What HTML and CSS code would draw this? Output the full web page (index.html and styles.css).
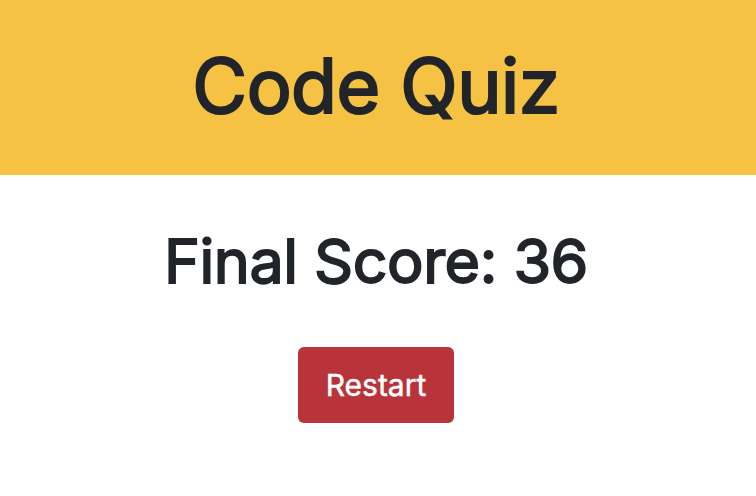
FILE: index.html
```html
<!DOCTYPE html>
<html>
<head>
<meta charset="utf-8">
<link rel="stylesheet" href="styles.css">
</head>
<body>
<header class="hero">
  <h1 class="title">Code Quiz</h1>
</header>
<main class="result">
  <h2 class="score">Final Score: 36</h2>
  <button class="restart">Restart</button>
</main>
</body>
</html>
```
FILE: styles.css
```css
* { box-sizing: border-box; }
html, body { margin: 0; padding: 0; background: #fff; }
body {
  font-family: Inter, "Noto Sans", sans-serif;
  color: #212529;
  padding-right: 4px;
}
.hero {
  background: #f5c243;
  height: 175px;
  margin-right: -4px;
  padding-right: 4px;
  display: flex;
  align-items: center;
  justify-content: center;
}
.title {
  margin: 0 0 4px;
  font-size: 75px;
  font-weight: 400;
  line-height: 1;
  letter-spacing: -0.5px;
  -webkit-text-stroke: 2.2px #212529;
}
.result {
  display: flex;
  flex-direction: column;
  align-items: center;
}
.score {
  margin: 56px 0 0;
  font-size: 61px;
  font-weight: 400;
  line-height: 1;
  letter-spacing: -0.5px;
  -webkit-text-stroke: 1.8px #212529;
}
.restart {
  margin-top: 55px;
  width: 156px;
  height: 76px;
  border: none;
  border-radius: 6px;
  background: #b8333a;
  color: #fff;
  font-family: Inter, "Noto Sans", sans-serif;
  font-size: 30px;
  font-weight: 400;
  -webkit-text-stroke: 0.5px #fff;
}
```
